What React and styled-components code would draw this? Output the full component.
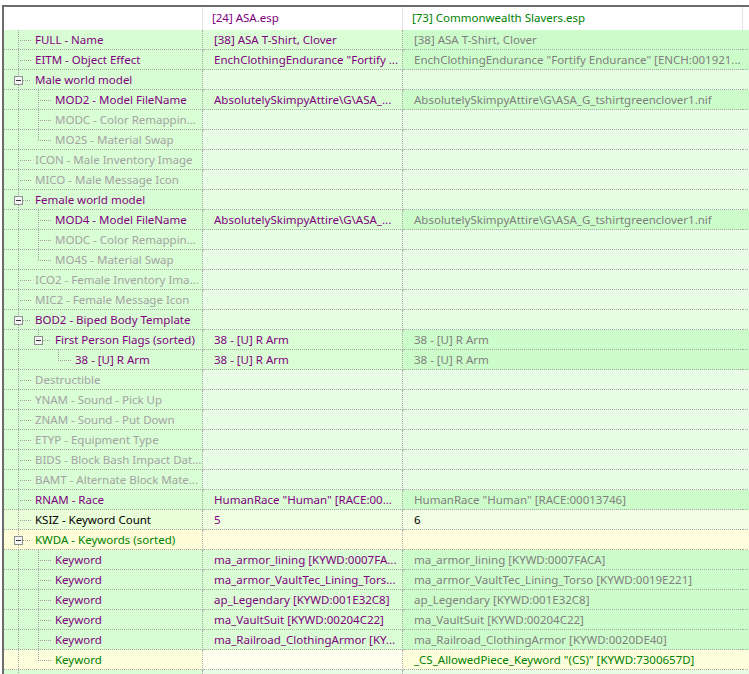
import React from 'react'
import styled, { createGlobalStyle } from 'styled-components'

const Global = createGlobalStyle`
  html, body { margin: 0; padding: 0; background: #fff; overflow: hidden; }
  body { height: 674px; font-family: 'Noto Sans', 'Open Sans', sans-serif; font-size: 11.5px; }
`

const palette = {
  green: { name: '#d8fdd4', v1: '#dafdd6', v2: '#cdfccb', empty: '#e6fde2' },
  dim: { name: '#d9fdd5', v1: '#e9fde6', v2: '#e9fde6', empty: '#e9fde6' },
  ksiz: { name: '#eafdd9', v1: '#effde0', v2: '#f2fde3', empty: '#effde0' },
  kwda: { name: '#fdfed8', v1: '#fefede', v2: '#fefede', empty: '#fefede' },
  fresh: { name: '#fdfedb', v1: '#fffff0', v2: '#fdfedb', empty: '#fffff0' },
}

const nameColor = { green: '#800080', dim: '#a3a3a3', ksiz: '#000000', kwda: '#008000', fresh: '#008000' }
const v2Color = { green: '#7f7f7f', dim: '#7f7f7f', ksiz: '#000000', kwda: '#7f7f7f', fresh: '#008000' }

const rows = [
  { name: 'FULL - Name', v1: '[38] ASA T-Shirt, Clover', v2: '[38] ASA T-Shirt, Clover' },
  { name: 'EITM - Object Effect', v1: 'EnchClothingEndurance "Fortify ...', v2: 'EnchClothingEndurance "Fortify Endurance" [ENCH:001921...' },
  { name: 'Male world model', box: true },
  { name: 'MOD2 - Model FileName', level: 1, v1: 'AbsolutelySkimpyAttire\\G\\ASA_...', v2: 'AbsolutelySkimpyAttire\\G\\ASA_G_tshirtgreenclover1.nif' },
  { name: 'MODC - Color Remappin...', level: 1, tone: 'dim' },
  { name: 'MO2S - Material Swap', level: 1, tone: 'dim', last: true },
  { name: 'ICON - Male Inventory Image', tone: 'dim' },
  { name: 'MICO - Male Message Icon', tone: 'dim' },
  { name: 'Female world model', box: true },
  { name: 'MOD4 - Model FileName', level: 1, v1: 'AbsolutelySkimpyAttire\\G\\ASA_...', v2: 'AbsolutelySkimpyAttire\\G\\ASA_G_tshirtgreenclover1.nif' },
  { name: 'MODC - Color Remappin...', level: 1, tone: 'dim' },
  { name: 'MO4S - Material Swap', level: 1, tone: 'dim', last: true },
  { name: 'ICO2 - Female Inventory Ima...', tone: 'dim' },
  { name: 'MIC2 - Female Message Icon', tone: 'dim' },
  { name: 'BOD2 - Biped Body Template', box: true },
  { name: 'First Person Flags (sorted)', level: 1, box: true, last: true, v1: '38 - [U] R Arm', v2: '38 - [U] R Arm' },
  { name: '38 - [U] R Arm', level: 2, last: true, pass: [true, false], v1: '38 - [U] R Arm', v2: '38 - [U] R Arm' },
  { name: 'Destructible', tone: 'dim' },
  { name: 'YNAM - Sound - Pick Up', tone: 'dim' },
  { name: 'ZNAM - Sound - Put Down', tone: 'dim' },
  { name: 'ETYP - Equipment Type', tone: 'dim' },
  { name: 'BIDS - Block Bash Impact Dat...', tone: 'dim' },
  { name: 'BAMT - Alternate Block Mate...', tone: 'dim' },
  { name: 'RNAM - Race', v1: 'HumanRace "Human" [RACE:00...', v2: 'HumanRace "Human" [RACE:00013746]' },
  { name: 'KSIZ - Keyword Count', tone: 'ksiz', v1: '5', v2: '6' },
  { name: 'KWDA - Keywords (sorted)', tone: 'kwda', box: true },
  { name: 'Keyword', level: 1, v1: 'ma_armor_lining [KYWD:0007FA...', v2: 'ma_armor_lining [KYWD:0007FACA]' },
  { name: 'Keyword', level: 1, v1: 'ma_armor_VaultTec_Lining_Tors...', v2: 'ma_armor_VaultTec_Lining_Torso [KYWD:0019E221]' },
  { name: 'Keyword', level: 1, v1: 'ap_Legendary [KYWD:001E32C8]', v2: 'ap_Legendary [KYWD:001E32C8]' },
  { name: 'Keyword', level: 1, v1: 'ma_VaultSuit [KYWD:00204C22]', v2: 'ma_VaultSuit [KYWD:00204C22]' },
  { name: 'Keyword', level: 1, v1: 'ma_Railroad_ClothingArmor [KY...', v2: 'ma_Railroad_ClothingArmor [KYWD:0020DE40]' },
  { name: 'Keyword', level: 1, tone: 'fresh', last: true, v2: '_CS_AllowedPiece_Keyword "(CS)" [KYWD:7300657D]' },
  { name: '', tone: 'dim' },
]

const Frame = styled.div`
  margin: 5px 0 0 2px;
  border-top: 2px solid #6d6d6d;
  border-left: 2px solid #6d6d6d;
`

const Grid = styled.div`
  display: grid;
  grid-template-columns: 199px 200px 340px 1fr;
`

const Head = styled.div`
  height: 23px;
  line-height: 22px;
  padding-left: 9px;
  background: #fff;
  border-right: ${p => (p.$end ? 'none' : '1px solid #e3e3e3')};
  color: ${p => p.$color || '#000'};
  white-space: nowrap;
  overflow: hidden;
`

const Cell = styled.div`
  height: 19px;
  line-height: 19px;
  background: ${p => p.$bg};
  border-bottom: 1px dotted #a8a8a8;
  border-right: ${p => (p.$sep ? '1px dotted #a8a8a8' : 'none')};
  color: ${p => p.$color};
  white-space: nowrap;
  overflow: hidden;
  padding-left: ${p => p.$pad || 0}px;
`

const NameCell = styled(Cell)`
  display: flex;
  align-items: stretch;
  padding-left: 4px;
`

const Guide = styled.svg`
  flex: none;
  display: block;
`

const Label = styled.span`
  display: block;
`

function Pass({ on }) {
  return (
    <Guide width="20" height="20">
      {on && <line x1="10.5" y1="0" x2="10.5" y2="20" stroke="#a0a0a0" strokeDasharray="1 1" />}
    </Guide>
  )
}

function Branch({ box, last }) {
  return (
    <Guide width="27" height="20">
      {box ? (
        <>
          <line x1="10.5" y1="0" x2="10.5" y2="6" stroke="#a0a0a0" strokeDasharray="1 1" />
          {!last && <line x1="10.5" y1="15" x2="10.5" y2="20" stroke="#a0a0a0" strokeDasharray="1 1" />}
          <line x1="15" y1="10.5" x2="23" y2="10.5" stroke="#a0a0a0" strokeDasharray="1 1" />
          <rect x="6.5" y="6.5" width="8" height="8" fill="#f4f4f4" stroke="#8e8e8e" />
          <line x1="8" y1="10.5" x2="13" y2="10.5" stroke="#333" />
        </>
      ) : (
        <>
          <line x1="10.5" y1="0" x2="10.5" y2={last ? 11 : 20} stroke="#a0a0a0" strokeDasharray="1 1" />
          <line x1="12" y1="10.5" x2="23" y2="10.5" stroke="#a0a0a0" strokeDasharray="1 1" />
        </>
      )}
    </Guide>
  )
}

export default function App() {
  return (
    <>
      <Global />
      <Frame>
        <Grid>
          <Head />
          <Head $color="#800080">[24] ASA.esp</Head>
          <Head $color="#008000">[73] Commonwealth Slavers.esp</Head>
          <Head $end />
          {rows.map((r, i) => {
            const tone = r.tone || 'green'
            const c = palette[tone]
            const level = r.level || 0
            const pass = r.pass || Array.from({ length: level }, () => true)
            return (
              <React.Fragment key={i}>
                <NameCell $bg={c.name} $color={nameColor[tone]} $sep>
                  {pass.map((on, j) => <Pass key={j} on={on} />)}
                  <Branch box={r.box} last={r.last} />
                  <Label>{r.name}</Label>
                </NameCell>
                <Cell $bg={r.v1 ? c.v1 : c.empty} $color="#800080" $pad={11} $sep>{r.v1}</Cell>
                <Cell $bg={r.v2 ? c.v2 : c.empty} $color={v2Color[tone]} $pad={11}>{r.v2}</Cell>
                <Cell $bg={r.v2 ? c.v2 : c.empty} />
              </React.Fragment>
            )
          })}
        </Grid>
      </Frame>
    </>
  )
}
